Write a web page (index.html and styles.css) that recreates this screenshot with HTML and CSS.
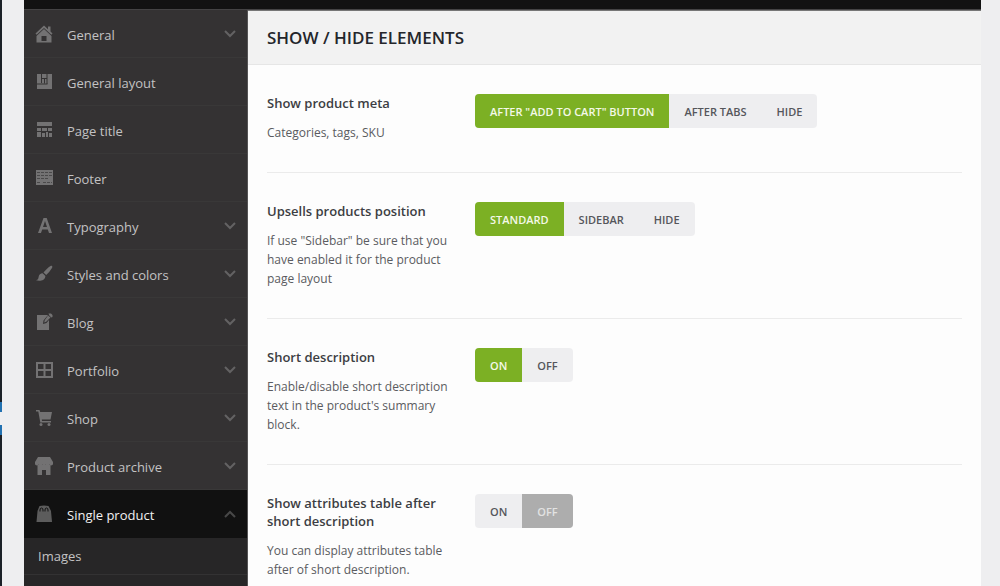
FILE: index.html
```html
<!DOCTYPE html>
<html lang="en">
<head>
<meta charset="utf-8">
<title>Theme settings</title>
<link rel="stylesheet" href="styles.css">
</head>
<body>
<div class="app">
  <div class="admin-rail"><span class="admin-rail-current"></span></div>
  <div class="panel">
    <div class="topbar"></div>
    <div class="panel-body">
      <nav class="sidebar">
        <a class="nav-item" href="#"><svg class="icon" viewBox="0 0 18 18"><path d="M9 0.500L0.500 8.500l1.200 1.200L9 3l7.300 6.700 1.200-1.200L15.500 6.600V1.500h-2.500v2.700z"/><path fill-rule="evenodd" d="M9 4L1.500 11v6.500h15V11zM6.500 11h5v5h-5z"/></svg><span class="nav-label">General</span><svg class="chevron" viewBox="0 0 12 8"><path d="M1 1l5 5 5-5"/></svg></a>
        <a class="nav-item" href="#"><svg class="icon" viewBox="0 0 18 18"><path d="M2 1h15v15H2z"/><path class="icon-cut" d="M6.500 1v9M2 11h10.500M12 1v10M7 5.500h5M9.500 5.500v5"/></svg><span class="nav-label">General layout</span></a>
        <a class="nav-item" href="#"><svg class="icon" viewBox="0 0 18 18"><path d="M2 1h15v4H2zM2 7h4v3H2zM7 7h5v3H7zM13 7h4v3h-4zM2 11h4v5H2zM7 12h3v4H7zM11 11h2v5h-2zM14 12h3v4h-3z"/></svg><span class="nav-label">Page title</span></a>
        <a class="nav-item" href="#"><svg class="icon" viewBox="0 0 18 18"><path d="M1 1h17v15H1z"/><path class="icon-cut icon-cut-soft" d="M2 3.500h15M2 6.500h15M2 9.500h11M2 13.500h4M8 13.500h9"/></svg><span class="nav-label">Footer</span></a>
        <a class="nav-item" href="#"><svg class="icon" viewBox="0 0 18 18"><path fill-rule="evenodd" d="M8.500 1h3.200L17 16h-3l-1.200-3.500H7.200L6 16H3zM10 4L8 10h4z"/></svg><span class="nav-label">Typography</span><svg class="chevron" viewBox="0 0 12 8"><path d="M1 1l5 5 5-5"/></svg></a>
        <a class="nav-item" href="#"><svg class="icon" viewBox="0 0 18 18"><path d="M17 1c.6.600.3 1.500-.2 2.300-1.500 2.500-3.600 5-5.600 6.700L8.500 7.500C10.500 5 13 2.500 15.500 1c.6-.4 1.200-.4 1.500 0zM7.700 8.300l2.700 2.700c-.2 2.500-1.500 4-4 4.500-2 .4-4 .2-5.400-.2 2-.5 2.300-1.500 2.600-3.300C4 9.500 5.500 8.300 7.700 8.300z"/></svg><span class="nav-label">Styles and colors</span><svg class="chevron" viewBox="0 0 12 8"><path d="M1 1l5 5 5-5"/></svg></a>
        <a class="nav-item" href="#"><svg class="icon" viewBox="0 0 18 18"><path d="M2 2h11L8.500 7.500 8 11l3.500-1L14 7v10H2z"/><path d="M13.500 0.500h2.500l1.500 1.500v2l-1.200.5-2-2zM13 2.500l2.500 2-4.300 4.300-2 .7.500-2.300z"/></svg><span class="nav-label">Blog</span><svg class="chevron" viewBox="0 0 12 8"><path d="M1 1l5 5 5-5"/></svg></a>
        <a class="nav-item" href="#"><svg class="icon" viewBox="0 0 18 18"><path fill-rule="evenodd" d="M1 1h17v16H1zM3 3v5h5.500V3zM10.500 3v5H16V3zM3 10v5h5.500v-5zM10.500 10v5H16v-5z"/></svg><span class="nav-label">Portfolio</span><svg class="chevron" viewBox="0 0 12 8"><path d="M1 1l5 5 5-5"/></svg></a>
        <a class="nav-item" href="#"><svg class="icon" viewBox="0 0 18 18"><path d="M1 1h3.500l.7 2H17l-1.500 7.500H6.800l.2 1.500h9v1.500H5.300L3.300 2.500H1z"/><circle cx="6" cy="15.500" r="1.500"/><circle cx="14" cy="15.500" r="1.500"/></svg><span class="nav-label">Shop</span><svg class="chevron" viewBox="0 0 12 8"><path d="M1 1l5 5 5-5"/></svg></a>
        <a class="nav-item" href="#"><svg class="icon" viewBox="0 0 18 18"><path d="M3 0h12l3 5v2c0 1.500-3 2-3.600.5C13.500 9 11 9 10.800 7.500 10 9 8 9 7.200 7.500 7 9 4.500 9 3.600 7.500 3 9 0 8.500 0 7V5z"/><path fill-rule="evenodd" d="M2.500 8h13v10h-4.500v-5H7v5H2.500z"/></svg><span class="nav-label">Product archive</span><svg class="chevron" viewBox="0 0 12 8"><path d="M1 1l5 5 5-5"/></svg></a>
        <a class="nav-item nav-item-active" href="#" aria-current="page"><svg class="icon" viewBox="0 0 18 18"><path d="M4.500 1Q9 0 13.500 1L16 6l1 11H1.500l1-11z"/><path class="icon-cut" d="M5 6.500V5q0-2 1.500-2T8 5v1.500M10 6.500V5q0-2 1.500-2T13 5v1.500"/></svg><span class="nav-label">Single product</span><svg class="chevron" viewBox="0 0 12 8"><path d="M1 7l5-5 5 5"/></svg></a>
        <div class="subnav">
          <a class="subnav-item" href="#">Images</a>
        </div>
      </nav>
      <main class="content">
        <header class="content-header"><h1 class="content-title">SHOW / HIDE ELEMENTS</h1></header>
        <div class="options">
          <section class="option">
            <div class="option-info">
              <h2 class="option-title" id="meta">Show product meta</h2>
              <p class="option-text">Categories, tags, SKU</p>
            </div>
            <div class="switch" role="group" aria-labelledby="meta">
              <button class="choice choice-on" type="button" aria-pressed="true">AFTER "ADD TO CART" BUTTON</button>
              <button class="choice" type="button">AFTER TABS</button>
              <button class="choice" type="button">HIDE</button>
            </div>
          </section>
          <section class="option">
            <div class="option-info">
              <h2 class="option-title" id="upsells">Upsells products position</h2>
              <p class="option-text">If use "Sidebar" be sure that you have enabled it for the product page layout</p>
            </div>
            <div class="switch" role="group" aria-labelledby="upsells">
              <button class="choice choice-on" type="button" aria-pressed="true">STANDARD</button>
              <button class="choice" type="button">SIDEBAR</button>
              <button class="choice" type="button">HIDE</button>
            </div>
          </section>
          <section class="option">
            <div class="option-info">
              <h2 class="option-title" id="short">Short description</h2>
              <p class="option-text">Enable/disable short description text in the product's summary block.</p>
            </div>
            <div class="switch" role="group" aria-labelledby="short">
              <button class="choice choice-on" type="button" aria-pressed="true">ON</button>
              <button class="choice" type="button">OFF</button>
            </div>
          </section>
          <section class="option">
            <div class="option-info">
              <h2 class="option-title" id="attributes">Show attributes table after short description</h2>
              <p class="option-text">You can display attributes table after of short description.</p>
            </div>
            <div class="switch" role="group" aria-labelledby="attributes">
              <button class="choice" type="button">ON</button>
              <button class="choice choice-off" type="button" aria-pressed="true">OFF</button>
            </div>
          </section>
        </div>
      </main>
    </div>
  </div>
</div>
</body>
</html>
```
FILE: styles.css
```css
* { box-sizing: border-box; }
body {
  margin: 0;
  background: #eeeef0;
  color: #3c3e43;
  font-family: "Segoe UI", "Open Sans", "Noto Sans", sans-serif;
}
h1, h2, p { margin: 0; }
a { color: inherit; text-decoration: none; }

.app {
  display: flex;
  height: 100vh;
  overflow: hidden;
  padding-right: 19px;
}
.admin-rail {
  position: relative;
  flex: 0 0 2px;
  margin-right: 22px;
  background: #1b2027;
}
.admin-rail-current {
  position: absolute;
  top: 402px;
  left: 0;
  width: 2px;
  height: 33px;
  background: linear-gradient(#2271b1 10px, #eeeef0 10px, #eeeef0 23px, #2271b1 23px);
}

.panel { flex: 1; min-width: 0; }
.topbar {
  height: 10px;
  background: #121212;
  border-bottom: 1px solid #444344;
}
.panel-body {
  display: flex;
  min-height: 100%;
}

.sidebar {
  flex: 0 0 224px;
  background: #343233;
  border-right: 1px solid #555455;
  color: #c3c2c3;
}
.nav-item {
  display: flex;
  align-items: center;
  height: 48px;
  padding: 0 11px;
  border-bottom: 1px solid #393838;
  font-size: 13px;
}
.icon {
  width: 18px;
  height: 18px;
  margin-right: 14px;
  fill: #737273;
}
.icon-cut { fill: none; stroke: #343233; stroke-width: 1; }
.icon-cut-soft { stroke: #4a494a; stroke-dasharray: 3 1; }
.nav-label { flex: 1; padding-top: 2px; }
.chevron {
  width: 12px;
  height: 8px;
  fill: none;
  stroke: #636263;
  stroke-width: 2;
}
.nav-item-active {
  background: #111;
  border-bottom-color: #111;
  color: #f1f1f1;
}
.nav-item-active .icon { fill: #5c5c5c; }
.nav-item-active .icon-cut { stroke: #111; }
.nav-item-active .chevron { stroke: #484848; }
.subnav { background: #272627; height: 100%; }
.subnav-item {
  display: block;
  padding: 0 14px;
  border-bottom: 1px solid #333233;
  font-size: 13px;
  line-height: 36px;
}

.content { flex: 1; min-width: 0; background: #fdfdfd; }
.content-header {
  display: flex;
  align-items: center;
  height: 55px;
  padding: 0 19px;
  background: #f2f2f2;
  border-top: 1px solid #777;
  border-bottom: 1px solid #e6e6e6;
}
.content-title {
  color: #24262b;
  font-size: 17px;
  font-weight: 600;
}
.options { padding: 0 19px; }
.option {
  display: flex;
  align-items: flex-start;
  gap: 20px;
  padding: 29px 0 30px;
  border-bottom: 1px solid #ebebeb;
}
.option-info { flex: 0 0 188px; }
.option-title {
  margin-bottom: 11px;
  font-size: 13px;
  font-weight: 600;
  line-height: 18px;
}
.option-text {
  color: #5a5b60;
  font-size: 12px;
  line-height: 19px;
}
.switch {
  display: flex;
  overflow: hidden;
  border-radius: 4px;
  background: #eeeef0;
}
.choice {
  height: 34px;
  padding: 0 15px;
  border: 0;
  background: none;
  color: #55565b;
  font-family: inherit;
  font-size: 11px;
  font-weight: 600;
}
.choice-on { background: #7cb024; color: #f4f9e8; }
.choice-off { background: #adadad; color: #e2e2e2; }
```
